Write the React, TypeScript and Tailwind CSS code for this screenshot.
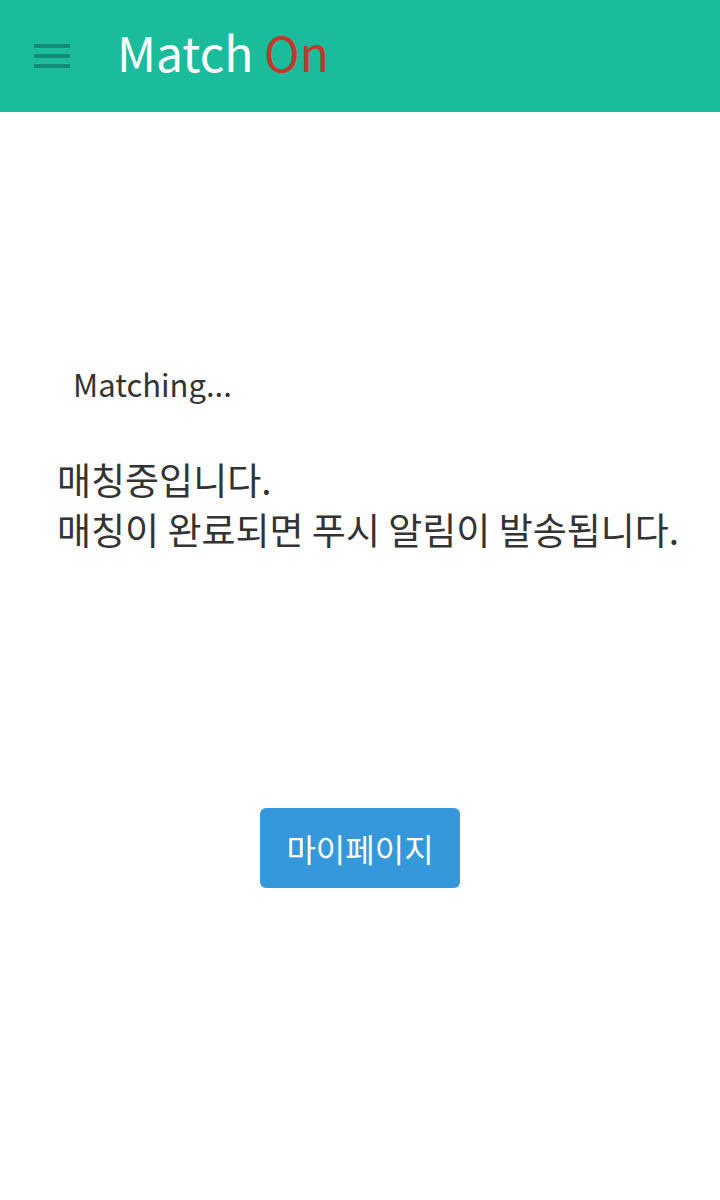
export default function App() {
  return (
    <div className="min-h-[1200px] bg-white" style={{ fontFamily: '"Noto Sans CJK KR", "Noto Sans", sans-serif' }}>
      {/* Header */}
      <header className="h-[112px] bg-[#1abc9c] flex items-center">
        <button className="ml-[34px] w-[36px] flex flex-col gap-[6px]">
          <span className="block h-[4px] w-full bg-[#138d75]" />
          <span className="block h-[4px] w-full bg-[#138d75]" />
          <span className="block h-[4px] w-full bg-[#138d75]" />
        </button>
        <h1 className="ml-[47px] -mt-[10px] text-[48px] leading-none text-white">
          Match <span className="text-[#c0392b]">On</span>
        </h1>
      </header>

      {/* Body */}
      <main className="pt-[250px]">
        <p className="pl-[73px] text-[31px] leading-[44px] text-[#333]">Matching...</p>
        <div className="pl-[57px] mt-[48px] text-[37px] leading-[50px] text-[#333]">
          <p>매칭중입니다.</p>
          <p>매칭이 완료되면 푸시 알림이 발송됩니다.</p>
        </div>
        <div className="mt-[254px] flex justify-center">
          <button className="w-[200px] h-[80px] rounded-[6px] bg-[#3498db] text-white text-[32px]">마이페이지</button>
        </div>
      </main>
    </div>
  );
}
